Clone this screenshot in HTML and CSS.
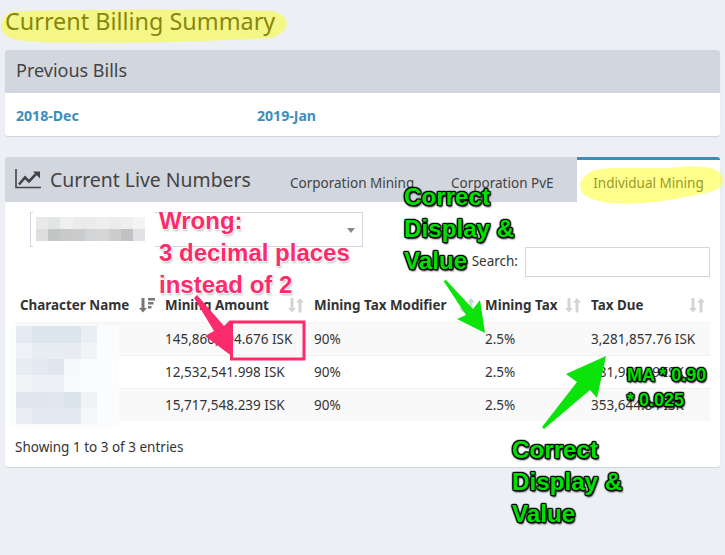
FILE: index.html
```html
<!DOCTYPE html>
<html lang="en">
<head>
<meta charset="utf-8">
<title>Current Billing Summary</title>
<link rel="stylesheet" href="styles.css">
</head>
<body>
<h1 class="page-title">Current Billing Summary</h1>
<section class="box">
  <div class="box-header">Previous Bills</div>
  <div class="bills"><a class="bill" href="#">2018-Dec</a><a class="bill" href="#">2019-Jan</a></div>
</section>
<section class="box live">
  <div class="tabs">
    <div class="tabs-title">
      <svg class="chart-icon" width="26" height="20" viewBox="0 0 26 20"><path d="M1 0V18.500H26" fill="none" stroke="#444" stroke-width="1.600"/><path d="M4 15.500L10 8.500L14 12.500L21 5" fill="none" stroke="#444" stroke-width="2.600"/><path d="M18 2.500H25V9.500Z" fill="#444"/></svg>
      <span>Current Live Numbers</span>
    </div>
    <div class="tab">Corporation Mining</div>
    <div class="tab tab-pve">Corporation PvE</div>
    <div class="tab tab-active">Individual Mining</div>
  </div>
  <div class="controls">
    <div class="select"><span class="caret"></span></div>
    <label class="search">Search:<span class="search-input"></span></label>
  </div>
  <table class="data">
    <colgroup><col class="c1"><col class="c2"><col class="c3"><col class="c4"><col class="c5"></colgroup>
    <thead>
      <tr>
        <th><div class="th">Character Name<svg class="sort on" width="18" height="16" viewBox="0 0 18 16"><path d="M3.500 1v10H1l4 4.500L9 11H6.500V1z M10 1h7v2.500h-7z M10 5h5.500v2.500H10z M10 9h3.500v2.500H10z" fill="#777"/></svg></div></th>
        <th><div class="th">Mining Amount<svg class="sort" width="18" height="16" viewBox="0 0 18 16"><path d="M3.500 1v10H1l4 4.500L9 11H6.500V1z M14.500 15.500V5.500H17l-4-4.500-4 4.500h2.500v10z" fill="#d4d4d4"/></svg></div></th>
        <th><div class="th">Mining Tax Modifier<svg class="sort" width="18" height="16" viewBox="0 0 18 16"><path d="M3.500 1v10H1l4 4.500L9 11H6.500V1z M14.500 15.500V5.500H17l-4-4.500-4 4.500h2.500v10z" fill="#d4d4d4"/></svg></div></th>
        <th><div class="th">Mining Tax<svg class="sort" width="18" height="16" viewBox="0 0 18 16"><path d="M3.500 1v10H1l4 4.500L9 11H6.500V1z M14.500 15.500V5.500H17l-4-4.500-4 4.500h2.500v10z" fill="#d4d4d4"/></svg></div></th>
        <th><div class="th">Tax Due<svg class="sort" width="18" height="16" viewBox="0 0 18 16"><path d="M3.500 1v10H1l4 4.500L9 11H6.500V1z M14.500 15.500V5.500H17l-4-4.500-4 4.500h2.500v10z" fill="#d4d4d4"/></svg></div></th>
      </tr>
    </thead>
    <tbody>
      <tr class="odd"><td></td><td>145,860,394.676 ISK</td><td>90%</td><td>2.5%</td><td>3,281,857.76 ISK</td></tr>
      <tr><td></td><td>12,532,541.998 ISK</td><td>90%</td><td>2.5%</td><td>281,982.19 ISK</td></tr>
      <tr class="odd"><td></td><td>15,717,548.239 ISK</td><td>90%</td><td>2.5%</td><td>353,644.84 ISK</td></tr>
    </tbody>
  </table>
  <p class="info">Showing 1 to 3 of 3 entries</p>
</section>

<svg class="overlay marks" width="725" height="555" viewBox="0 0 725 555">
  <path class="hl" d="M12 12C40 9 250 9 272 11C292 15 292 33 270 38C200 42 70 45 25 41C4 40-3 28 3 20C4 16 8 13 12 12Z"/>
  <path class="hl" d="M590 172C600 166 640 169 670 168C700 165 722 166 723 180C723 192 705 193 680 198C640 206 605 205 590 198C576 192 578 180 590 172Z"/>
  <!-- blurred select content -->
  <g>
    <rect x="33" y="211" width="122" height="42" fill="#fff"/>
    <rect x="36" y="217" width="12" height="12" fill="#e9e9e9"/><rect x="48" y="217" width="12" height="12" fill="#e2e4e6"/><rect x="60" y="217" width="13" height="12" fill="#eef0ef"/><rect x="73" y="217" width="24" height="12" fill="#ebebeb"/><rect x="97" y="217" width="12" height="12" fill="#eeeeee"/><rect x="109" y="217" width="12" height="12" fill="#ececec"/><rect x="121" y="217" width="12" height="12" fill="#efefef"/><rect x="133" y="217" width="12" height="12" fill="#f4f4f4"/>
    <rect x="36" y="229" width="12" height="12" fill="#dfdedc"/><rect x="48" y="229" width="12" height="12" fill="#c4c5c6"/><rect x="60" y="229" width="13" height="12" fill="#c8cac8"/><rect x="73" y="229" width="12" height="12" fill="#cbcbcd"/><rect x="85" y="229" width="12" height="12" fill="#d2d5d5"/><rect x="97" y="229" width="12" height="12" fill="#d8d6d4"/><rect x="109" y="229" width="12" height="12" fill="#cdcdcb"/><rect x="121" y="229" width="12" height="12" fill="#c2c2c4"/><rect x="133" y="229" width="12" height="12" fill="#e0e2e4"/>
  </g>
  <!-- blurred names -->
  <g>
    <rect x="11" y="326" width="108" height="101" fill="#fbfcfd"/>
    <rect x="16" y="326" width="16" height="17" fill="#e3eaf1"/><rect x="32" y="326" width="49" height="17" fill="#dce5ee"/><rect x="81" y="326" width="16" height="17" fill="#e9eef3"/>
    <rect x="16" y="343" width="16" height="16" fill="#eef1f5"/><rect x="32" y="343" width="32" height="16" fill="#e8edf3"/><rect x="64" y="343" width="17" height="16" fill="#e9ecf1"/><rect x="81" y="343" width="16" height="16" fill="#f1f3f5"/>
    <rect x="16" y="359" width="16" height="16" fill="#e8edf3"/><rect x="32" y="359" width="16" height="16" fill="#e3e9f0"/><rect x="48" y="359" width="16" height="16" fill="#dfe6ed"/><rect x="64" y="359" width="16" height="16" fill="#f6f8fb"/>
    <rect x="16" y="375" width="16" height="17" fill="#f2f5f8"/><rect x="32" y="375" width="32" height="17" fill="#edf1f5"/><rect x="64" y="375" width="16" height="17" fill="#f9fafc"/>
    <rect x="16" y="392" width="32" height="16" fill="#dfe6ee"/><rect x="48" y="392" width="16" height="16" fill="#e2e8ef"/><rect x="64" y="392" width="17" height="16" fill="#dbe3ec"/><rect x="81" y="392" width="16" height="16" fill="#f0f2f5"/>
    <rect x="16" y="408" width="16" height="16" fill="#eaeef3"/><rect x="32" y="408" width="49" height="16" fill="#e2e9f1"/><rect x="81" y="408" width="16" height="16" fill="#f5f6f8"/>
  </g>
  <!-- red box and arrow -->
  <rect class="redbox" x="231.500" y="322" width="72.500" height="37"/>
  <path class="red-arrow" d="M194 298L197 295L224 326L230 320L233 357L205 336L214 331Z"/>
  <!-- green arrows -->
  <path class="green-arrow" d="M443.500 281L446 280L473 309L480 300L485 333L457 319L466 315Z"/>
  <path class="green-arrow" d="M544 429L542 427L577 382L566 374L606 356L597 398L590 390Z"/>
</svg>

<div class="note wrong">Wrong:<br>3 decimal places<br>instead of 2</div>
<div class="note ok ok-a">Correct<br>Display &amp;<br>Value</div>
<div class="note ok ok-b">Correct<br>Display &amp;<br>Value</div>
<div class="note ok ok-c">MA * 0.90<br>* 0.025</div>
</body>
</html>
```
FILE: styles.css
```css
* { box-sizing: border-box; }
html, body { margin: 0; height: 555px; overflow: hidden; }
body {
  position: relative;
  background: #ecf0f5;
  padding: 0 5px;
  font-family: "Noto Sans", sans-serif;
  font-size: 13.5px;
  color: #333;
}
.page-title {
  margin: 0;
  height: 50px;
  padding-top: 5px;
  font-size: 23.4px;
  line-height: 33px;
  font-weight: 400;
  color: #222;
}
.box {
  background: #fff;
  border-radius: 3px;
  box-shadow: 0 1px 1px rgba(0,0,0,.12);
  overflow: hidden;
}
.box-header {
  height: 43px;
  padding-left: 11px;
  background: #d2d6de;
  font-size: 18px;
  line-height: 41px;
  color: #444;
}
.bills { display: flex; height: 43px; align-items: center; padding-left: 11px; padding-top: 1px; }
.bill { width: 241px; color: #3c8dbc; font-weight: 700; text-decoration: none; font-size: 14.1px; }
.live { margin-top: 21px; height: 310px; }
.tabs { display: flex; height: 45px; background: #d2d6de; align-items: stretch; }
.tabs-title { display: flex; align-items: center; width: 285px; padding-left: 10px; padding-bottom: 1px; gap: 9px; font-size: 19.4px; color: #444; }
.tab { padding-top: 17px; font-size: 13.5px; color: #444; width: 161px; }
.tab-pve { width: 126px; }
.tab-active {
  width: 143px;
  background: #fff;
  border-top: 3px solid #3c8dbc;
  padding-top: 14px;
  text-align: center;
}
.controls { display: flex; justify-content: space-between; height: 88px; padding: 10px 10px 0 25px; }
.select { position: relative; width: 333px; height: 35px; border: 1px solid #d2d6de; }
.caret { position: absolute; right: 7px; top: 15px; border: 4px solid transparent; border-top: 5px solid #888; }
.search { display: flex; gap: 7px; align-items: flex-start; height: 30px; margin-top: 35px; line-height: 28px; }
.search-input { display: block; width: 185px; height: 30px; border: 1px solid #d2d6de; }
.data { width: 695px; margin-left: 10px; border-collapse: collapse; table-layout: fixed; }
.c1 { width: 145px; } .c2 { width: 149px; } .c3 { width: 171px; } .c4 { width: 106px; } .c5 { width: 124px; }
th { height: 32px; padding: 0 4px 2px 5px; border-bottom: 1px solid #f4f4f4; text-align: left; font-size: 13.4px; font-weight: 700; }
.th { display: flex; justify-content: space-between; align-items: center; white-space: nowrap; }
td { height: 33px; padding: 1px 5px 0; border-top: 1px solid #f0f0f0; white-space: nowrap; }
.odd td { background: #f9f9f9; }
.info { margin: 16px 0 0 10px; line-height: 20px; }
.overlay { position: absolute; left: 0; top: 0; }
.hl { fill: #ffff00; fill-opacity: .45; }
.redbox { fill: none; stroke: #fb2c6b; stroke-width: 3; }
.red-arrow { fill: #fb2c6b; }
.green-arrow { fill: #0be30b; }
.note { position: absolute; font-family: "Liberation Sans", sans-serif; font-weight: 700; white-space: nowrap; }
.wrong { left: 159px; top: 205px; font-size: 24px; line-height: 32px; color: #fb2c6b; text-shadow: 1px 0 1px #fff, -1px 0 1px #fff, 0 1px 1px #fff, 0 -1px 1px #fff, 1px 2px 2px rgba(120,120,120,.5); }
.ok { color: #00e000; font-size: 24.2px; line-height: 32px; text-shadow: 1px 0 1px #000, -1px 0 1px #000, 0 1px 1px #000, 0 -1px 1px #000, 1px 1px 1px #000, -1px -1px 1px #000, 1px -1px 1px #000, -1px 1px 1px #000, 1px 2px 2px #000; }
.ok-a { left: 404px; top: 181px; }
.ok-b { left: 512px; top: 434px; }
.ok-c { left: 627px; top: 363px; font-size: 18px; line-height: 25px; }
```
